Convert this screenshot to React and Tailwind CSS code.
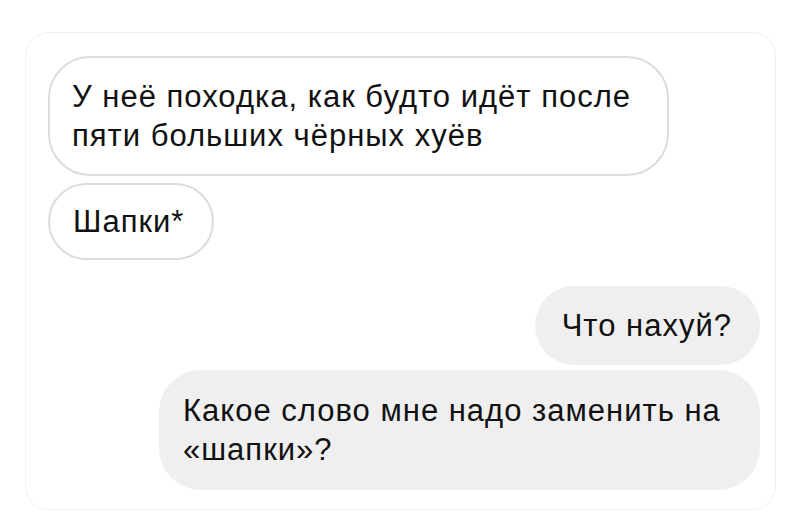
export default function App() {
  return (
    <div className="w-[798px] h-[530px] bg-white pt-[32px] pl-[25px]" style={{ fontFamily: '"Liberation Sans", Arial, sans-serif' }}>
      <div className="w-[751px] h-[478px] rounded-[24px] border border-[#efefef] pt-[23px] pl-[22px] pr-[15px] flex flex-col text-[31px] leading-[39px] tracking-[1px] text-[#111]">
        {/* incoming */}
        <div className="w-[621px] rounded-[42px] border-2 border-[#dcdcdc] px-[22px] py-[19px]">
          У неё походка, как будто идёт после пяти больших чёрных хуёв
        </div>
        <div className="self-start mt-[7px] rounded-full border-2 border-[#dcdcdc] pl-[23px] pr-[28px] py-[17px]">
          Шапки*
        </div>

        {/* outgoing */}
        <div className="self-end mt-[26px] rounded-full bg-[#efefef] pl-[27px] pr-[28px] py-[20px]">
          Что нахуй?
        </div>
        <div className="self-end mt-[5px] w-[601px] rounded-[42px] bg-[#efefef] px-[24px] py-[21px]">
          Какое слово мне надо заменить на «шапки»?
        </div>
      </div>
    </div>
  )
}
